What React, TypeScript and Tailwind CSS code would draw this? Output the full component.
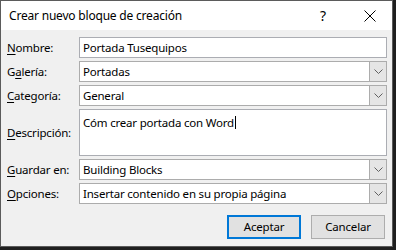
function Label({ text, k }: { text: string; k: number }) {
  return (
    <span>
      {text.slice(0, k)}
      <span className="underline decoration-1 underline-offset-2">{text[k]}</span>
      {text.slice(k + 1)}
    </span>
  )
}

function Chevron() {
  return (
    <svg width="9" height="5" viewBox="0 0 9 5" fill="none">
      <path d="M0.5 0.5 L4.5 4.5 L8.5 0.5" stroke="#606060" strokeWidth="1" />
    </svg>
  )
}

function TextField({ value }: { value: string }) {
  return (
    <div className="flex h-[21px] items-center border border-[#abadb3] bg-white pl-[3px]">{value}</div>
  )
}

function Combo({ value }: { value: string }) {
  return (
    <div className="flex h-[21px] items-stretch border border-[#acacac] bg-white">
      <span className="flex flex-1 items-center pl-[3px]">{value}</span>
      <span className="flex w-[17px] items-center justify-center border-l border-[#acacac] bg-[#e5e5e5]">
        <Chevron />
      </span>
    </div>
  )
}

export default function App() {
  return (
    <div className="h-[250px] w-[396px] bg-[#1f1f1f] font-['Noto_Sans',sans-serif] text-[11.5px] leading-none tracking-[-0.2px] text-black">
      <div className="flex h-[247px] w-[393px] flex-col border border-[#5b5b5b] bg-[#f0f0f0]">
        <header className="flex h-[29px] items-center bg-white pl-2 text-[12px]">
          <span className="flex-1">Crear nuevo bloque de creación</span>
          <span className="mr-[38px] text-[14px]">?</span>
          <span className="mr-[16px] flex w-[12px] justify-center">
            <svg width="12" height="12" viewBox="0 0 12 12" fill="none">
              <path d="M0.5 0.5 L11.5 11.5 M11.5 0.5 L0.5 11.5" stroke="#000" strokeWidth="1" />
            </svg>
          </span>
        </header>

        <div className="grid grid-cols-[72px_1fr] items-center gap-y-[3px] pl-[6px] pr-[5px] pt-[7px]">
          <Label text="Nombre:" k={0} />
          <TextField value="Portada Tusequipos" />

          <Label text="Galería:" k={1} />
          <Combo value="Portadas" />

          <Label text="Categoría:" k={0} />
          <Combo value="General" />

          <Label text="Descripción:" k={0} />
          <div className="h-[47px] border border-[#abadb3] bg-white pl-[3px] pt-[4px]">
            <span>Cóm crear portada con Word</span>
            <span className="ml-px inline-block h-[13px] w-px translate-y-[2px] bg-black" />
          </div>

          <Label text="Guardar en:" k={0} />
          <Combo value="Building Blocks" />

          <Label text="Opciones:" k={0} />
          <Combo value="Insertar contenido en su propia página" />
        </div>

        <div className="mt-[11px] flex justify-end gap-[10px] pr-[7px]">
          <button className="h-[24px] w-[74px] border-2 border-[#0078d7] bg-[#e1e1e1]">Aceptar</button>
          <button className="h-[24px] w-[74px] border border-[#adadad] bg-[#e1e1e1]">Cancelar</button>
        </div>
      </div>
    </div>
  )
}
